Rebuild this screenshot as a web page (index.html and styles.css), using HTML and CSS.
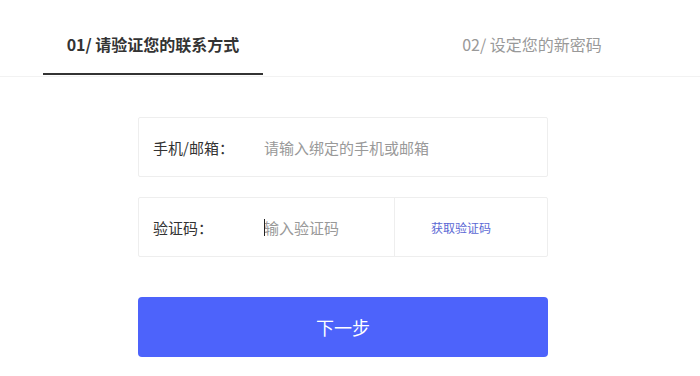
FILE: index.html
```html
<!DOCTYPE html>
<html lang="zh-CN">

<head>
	<meta charset="UTF-8">
	<meta name="viewport" content="width=device-width, initial-scale=1.0">
	<title>找回密码</title>
	<link rel="stylesheet" href="styles.css">
</head>

<body>
	<div class="steps">
		<div class="step active">01/ 请验证您的联系方式</div>
		<div class="step">02/ 设定您的新密码</div>
	</div>
	<form class="form">
		<div class="field">
			<label class="label">手机/邮箱：</label>
			<input class="input" type="text" placeholder="请输入绑定的手机或邮箱">
		</div>
		<div class="field">
			<label class="label">验证码：</label>
			<div class="code-input">
				<span class="caret"></span>
				<input class="input" type="text" placeholder="输入验证码">
			</div>
			<a class="get-code" href="#">获取验证码</a>
		</div>
		<button type="button" class="next">下一步</button>
	</form>
</body>

</html>
```

FILE: styles.css
```css
body {
	margin: 0;
	background: #fff;
	font-family: "Noto Sans CJK SC", "Noto Sans", sans-serif;
	color: #333;
}

.steps {
	display: flex;
	gap: 159px;
	padding-left: 43px;
	height: 76px;
	border-bottom: 1px solid #f2f2f2;
}

.step {
	width: 220px;
	display: flex;
	align-items: center;
	justify-content: center;
	font-size: 16px;
	color: #999;
	box-sizing: border-box;
	padding-top: 12px;
}

.step.active {
	font-weight: bold;
	color: #333;
	border-bottom: 2px solid #333;
	height: 75px;
	padding-top: 14px;
}

.form {
	width: 410px;
	margin: 40px 0 0 138px;
	display: flex;
	flex-direction: column;
	gap: 20px;
}

.field {
	display: flex;
	align-items: stretch;
	height: 60px;
	box-sizing: border-box;
	border: 1px solid #eee;
	border-radius: 2px;
}

.label {
	width: 111px;
	padding-left: 14px;
	display: flex;
	align-items: center;
	font-size: 15px;
	color: #333;
	flex-shrink: 0;
}

.input {
	flex: 1;
	min-width: 0;
	border: none;
	outline: none;
	padding: 0;
	font-family: inherit;
	font-size: 15px;
	color: #333;
	background: transparent;
}

.input::placeholder {
	color: #999;
}

.code-input {
	width: 130px;
	display: flex;
	align-items: center;
	border-right: 1px solid #eee;
}

.caret {
	width: 1px;
	height: 17px;
	background: #222;
	margin-right: -1px;
	position: relative;
	z-index: 1;
}

.get-code {
	display: flex;
	align-items: center;
	padding-left: 36px;
	font-size: 12px;
	color: #5b68d4;
	text-decoration: none;
}

.next {
	margin-top: 20px;
	height: 60px;
	border: none;
	border-radius: 4px;
	background: #4d63fb;
	color: #fff;
	font-family: inherit;
	font-size: 18px;
	cursor: pointer;
}
```
